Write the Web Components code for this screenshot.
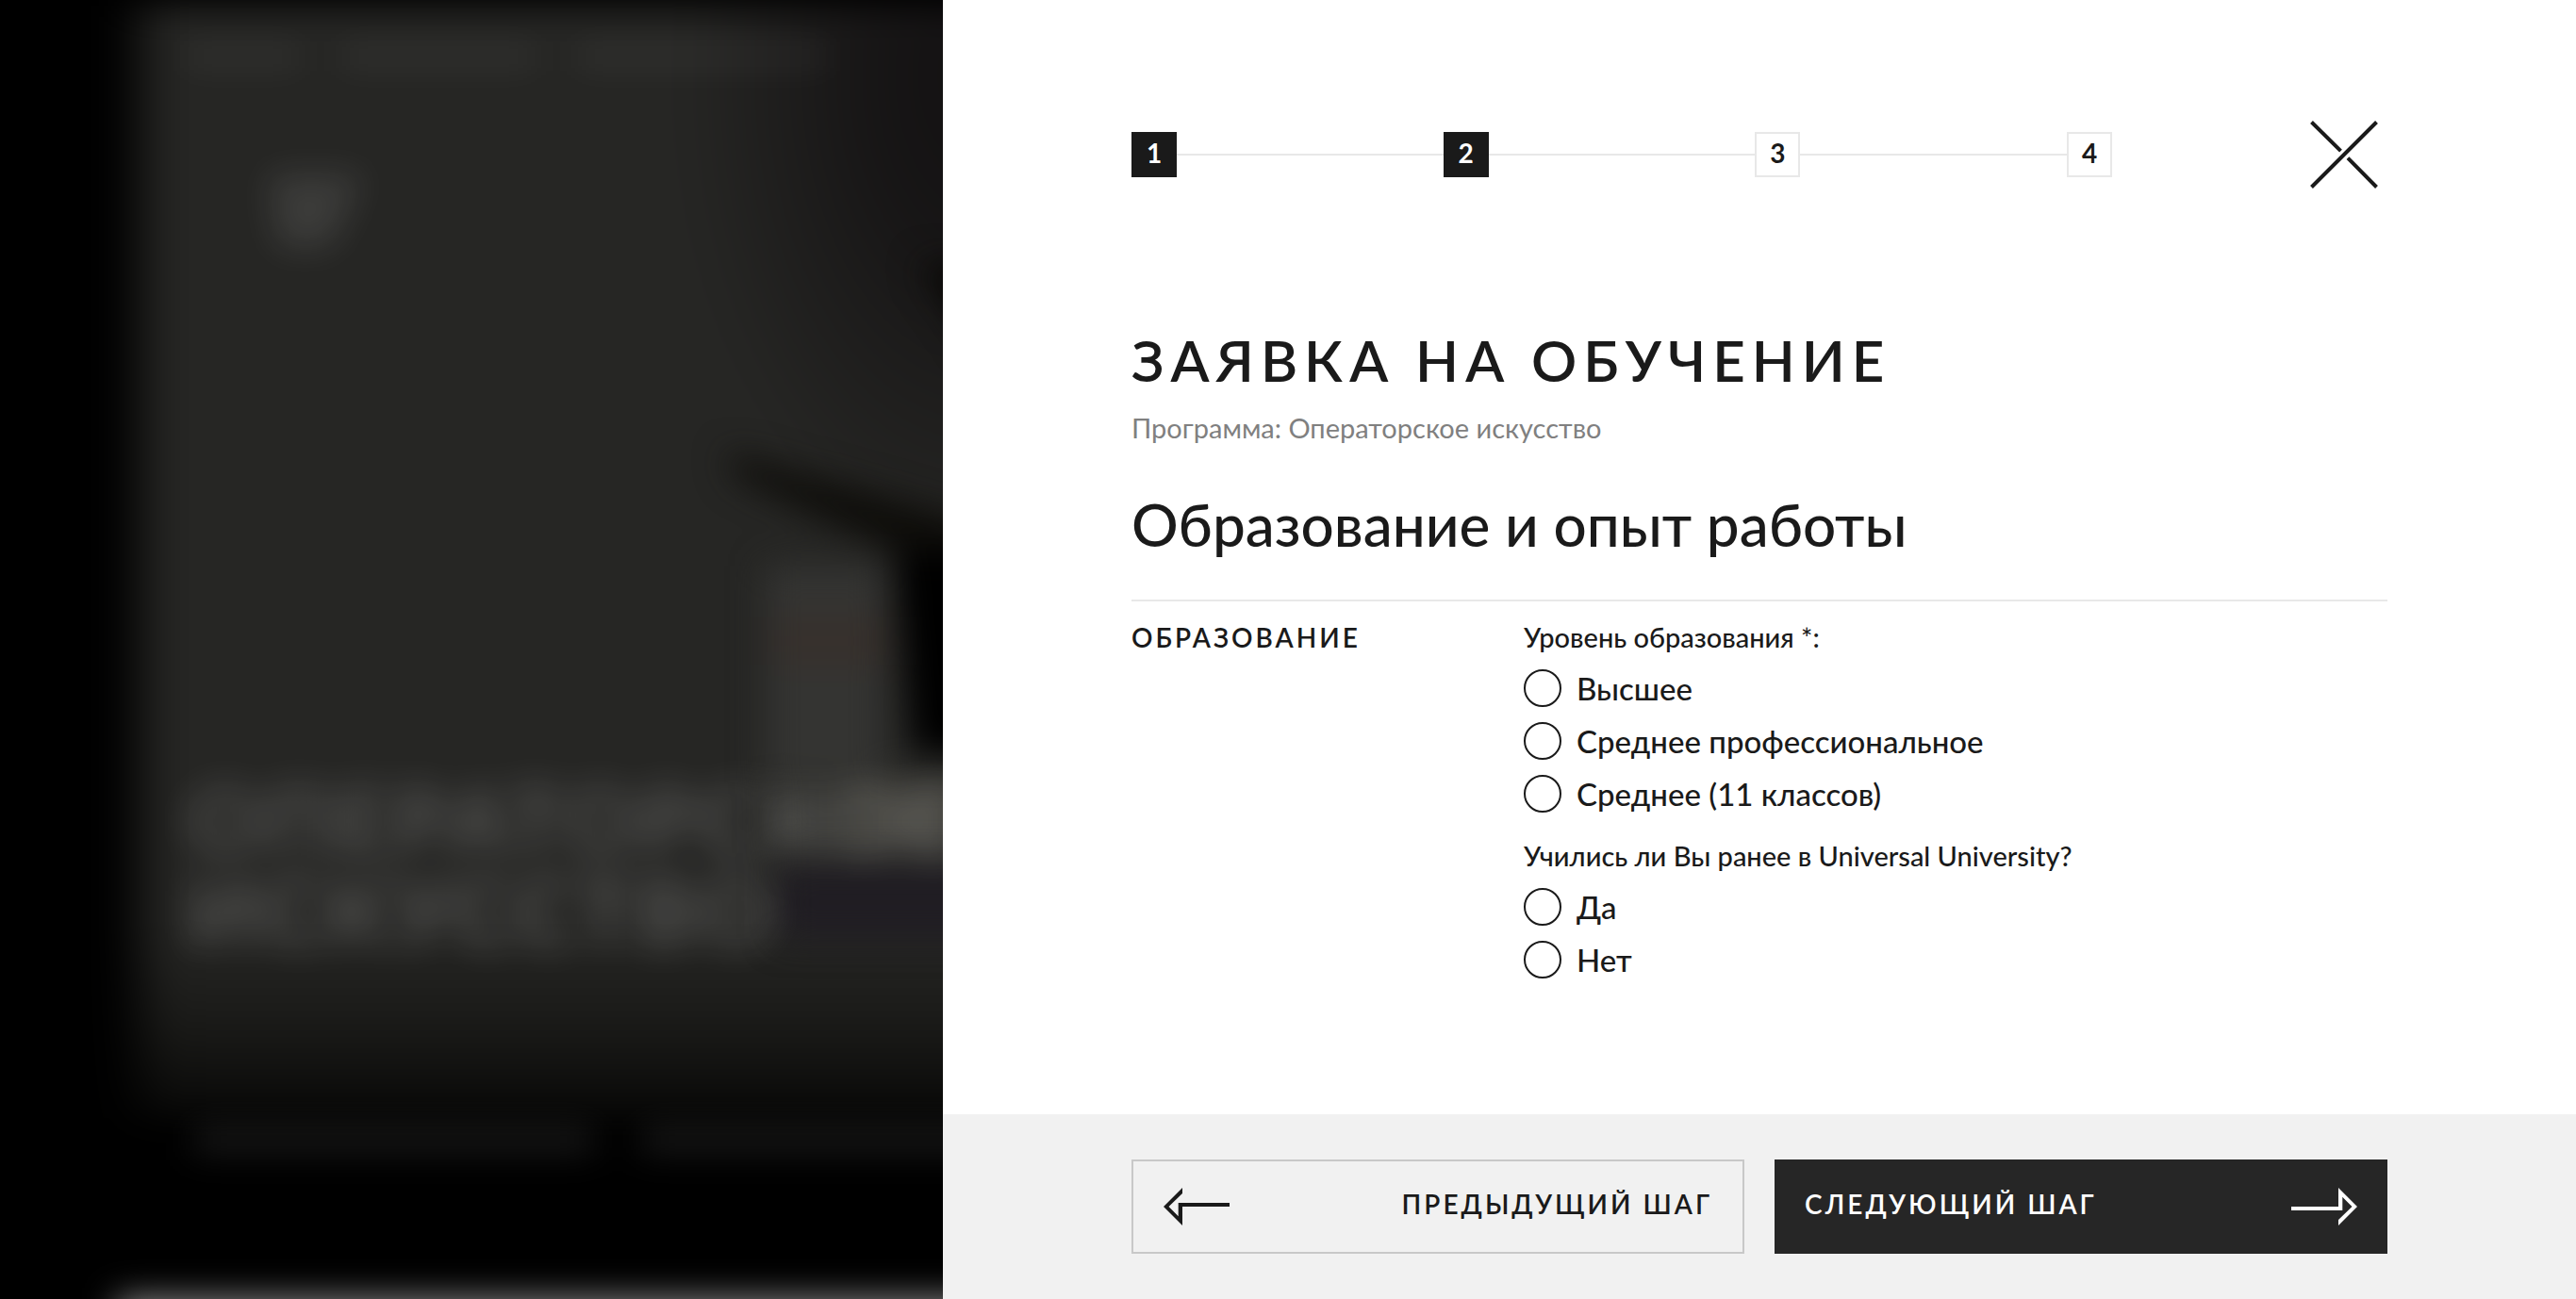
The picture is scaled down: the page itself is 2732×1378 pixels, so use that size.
<!DOCTYPE html>
<html lang="ru">
<head>
<meta charset="utf-8">
<meta name="viewport" content="width=device-width, initial-scale=1">
<title>Заявка на обучение</title>
<style>
  html, body { margin: 0; height: 100%; }
  body {
    font-family: Lato, "Open Sans", sans-serif;
    font-weight: 500;
    color: #1a1a1a;
    background: #fff;
    --ink: #1a1a1a;
    --line: #e8e8e8;
  }
</style>
</head>
<body>
<application-page></application-page>

<template id="t-application-page">
  <style>
    :host { display: flex; min-height: 100vh; }
    blurred-backdrop { flex: 1000 1 0; min-width: 0; }
    main { flex: 1732 1 0; min-width: 0; display: flex; flex-direction: column; background: #fff; }
    .body { flex: 1; padding: 128px 200px 48px; }
    header { display: flex; justify-content: space-between; align-items: center; margin-bottom: 146px; }
    step-progress { flex: 0 1 1040px; }
    h1 { margin: 0 0 18px; font-size: 60px; line-height: 72px; font-weight: 600; letter-spacing: 7px; text-transform: uppercase; }
    .program { margin: 0 0 48px; font-size: 29px; line-height: 36px; font-weight: 400; color: #808080; }
    h2 { margin: 0; padding-bottom: 44px; font-size: 62px; line-height: 72px; font-weight: 500; border-bottom: 2px solid var(--line); }
    footer { display: flex; gap: 32px; padding: 48px 200px; background: #f1f1f1; }
    footer > * { flex: 1 1 0; }
  </style>
  <blurred-backdrop></blurred-backdrop>
  <main>
    <div class="body">
      <header>
        <step-progress current="2" total="4"></step-progress>
        <close-button></close-button>
      </header>
      <h1>Заявка на обучение</h1>
      <p class="program">Программа: Операторское искусство</p>
      <h2>Образование и опыт работы</h2>
      <form-section heading="Образование">
        <radio-group name="level" legend="Уровень образования *:" options="Высшее|Среднее профессиональное|Среднее (11 классов)"></radio-group>
        <radio-group name="before" legend="Учились ли Вы ранее в Universal University?" options="Да|Нет"></radio-group>
      </form-section>
    </div>
    <footer>
      <nav-button direction="back">Предыдущий шаг</nav-button>
      <nav-button direction="forward">Следующий шаг</nav-button>
    </footer>
  </main>
</template>

<template id="t-step-progress">
  <style>
    :host { display: block; }
    ol { display: flex; align-items: center; margin: 0; padding: 0; list-style: none; }
    .step { box-sizing: border-box; width: 48px; height: 48px; padding-bottom: 4px; display: flex; align-items: center; justify-content: center; border: 2px solid var(--line); font-size: 28px; line-height: 36px; font-weight: 700; }
    .done { background: var(--ink); border-color: var(--ink); color: #fff; }
    .rail { flex: 1; height: 2px; background: var(--line); }
  </style>
  <ol></ol>
</template>

<template id="t-close-button">
  <style>
    :host { display: block; }
    button { display: block; padding: 0 10px; border: 0; background: none; color: inherit; cursor: pointer; }
    svg { display: block; }
  </style>
  <button type="button" aria-label="Закрыть">
    <svg width="72" height="72" viewBox="0 0 72 72" fill="none" stroke="currentColor" stroke-width="4">
      <path d="M1.5 70.500L70.500 1.500M1.500 1.500L32.500 32.200M40 39.700L70.500 70.500"/>
    </svg>
  </button>
</template>

<template id="t-form-section">
  <style>
    :host { display: flex; padding-top: 20px; }
    h3 { flex: 0 0 416px; margin: 0; font-size: 28px; line-height: 36px; font-weight: 600; letter-spacing: 3px; text-transform: uppercase; }
    .fields { flex: 1; display: flex; flex-direction: column; gap: 28px; }
  </style>
  <h3></h3>
  <div class="fields"><slot></slot></div>
</template>

<template id="t-radio-group">
  <style>
    :host { display: block; }
    fieldset { margin: 0; padding: 0; border: 0; min-width: 0; }
    legend { padding: 0; margin-bottom: 16px; font-size: 29px; line-height: 36px; }
    .options { display: flex; flex-direction: column; align-items: flex-start; gap: 16px; }
    label { display: flex; gap: 16px; font-size: 33px; line-height: 40px; cursor: pointer; }
    input { appearance: none; box-sizing: border-box; width: 40px; height: 40px; margin: 0; border: 2px solid var(--ink); border-radius: 50%; }
    input:checked { background: radial-gradient(var(--ink) 45%, transparent 48%); }
  </style>
  <fieldset><legend></legend><div class="options"></div></fieldset>
</template>

<template id="t-nav-button">
  <style>
    :host { display: block; }
    button { box-sizing: border-box; width: 100%; height: 100px; padding: 0 32px; display: flex; align-items: center; justify-content: space-between; border: 2px solid #c8c8c8; background: none; color: inherit; font: inherit; cursor: pointer; }
    span { padding-bottom: 6px; font-size: 28px; line-height: 36px; font-weight: 600; letter-spacing: 3px; text-transform: uppercase; }
    svg { display: block; overflow: visible; }
    :host([direction="forward"]) button { flex-direction: row-reverse; border: 0; background: #262626; color: #fff; }
    :host([direction="forward"]) svg { transform: rotate(180deg); }
  </style>
  <button type="button">
    <svg width="70" height="38" viewBox="0 0 70 38" fill="currentColor" aria-hidden="true">
      <path d="M0 19L20-1V5L5.500 19L15.700 29.200V15H70V19H20V39Z"/>
    </svg>
    <span><slot></slot></span>
  </button>
</template>

<template id="t-blurred-backdrop">
  <style>
    :host { display: block; position: relative; overflow: hidden; background: #000; }
    svg { position: absolute; inset: 0; width: 100%; height: 100%; }
    filter { color-interpolation-filters: sRGB; }
    text { font-size: 96px; font-weight: 700; letter-spacing: 4px; }
  </style>
  <svg viewBox="0 0 1000 1378" preserveAspectRatio="xMinYMin slice" aria-hidden="true">
    <defs>
      <filter id="soft" filterUnits="userSpaceOnUse" x="-200" y="-200" width="1500" height="1800"><feGaussianBlur stdDeviation="18"/></filter>
      <filter id="wide" filterUnits="userSpaceOnUse" x="-200" y="-200" width="1500" height="1800"><feGaussianBlur stdDeviation="26 18"/></filter>
      <linearGradient id="wall" x1="0" x2="0" y1="0" y2="1">
        <stop offset="0" stop-color="#262624"/><stop offset=".83" stop-color="#262624"/>
        <stop offset=".92" stop-color="#191917"/><stop offset="1" stop-color="#080807"/>
      </linearGradient>
      <radialGradient id="corner" gradientUnits="userSpaceOnUse" cx="0" cy="0" r="1" gradientTransform="translate(1040 80) scale(320 520)">
        <stop offset="0" stop-color="#131112"/><stop offset=".35" stop-color="#131112" stop-opacity=".8"/><stop offset="1" stop-color="#131112" stop-opacity="0"/>
      </radialGradient>
    </defs>
    <g filter="url(#wide)">
      <rect x="148" y="6" width="1200" height="1180" fill="url(#wall)"/>
      <rect x="700" y="6" width="600" height="640" fill="url(#corner)"/>
    </g>
    <g filter="url(#soft)">
      <path d="M770 480L1040 555V625L960 590Q880 555 780 505Z" fill="#0e0d0a"/>
      <path d="M975 280H1060V400Z" fill="#080705"/>
      <rect x="812" y="600" width="125" height="230" fill="#343432"/>
      <rect x="822" y="655" width="118" height="50" fill="#37302c"/>
      <path d="M950 585H1060V800H970Z" fill="#000"/>
      <rect x="820" y="820" width="250" height="85" fill="#31312e"/>
      <rect x="900" y="830" width="180" height="70" fill="#403f3a"/>
      <rect x="825" y="920" width="250" height="75" fill="#201d23"/>
    </g>
    <g filter="url(#soft)" fill="#fff">
      <path d="M195 48H320V72H195ZM360 48H570V72H360ZM610 48H880V72H610Z" fill-opacity=".05"/>
      <path d="M285 185H385L350 262H295Z" fill-opacity=".1"/>
      <text x="200" y="906" fill-opacity=".22">ОПЕРАТОРСКОЕ</text>
      <text x="200" y="1002" fill-opacity=".22">ИСКУССТВО</text>
      <path d="M205 1198H630V1220H205ZM680 1198H1050V1220H680Z" fill-opacity=".12"/>
      <path d="M125 1378H1100V1500H125Z" fill-opacity=".55"/>
    </g>
  </svg>
</template>

<script>
  class TemplateElement extends HTMLElement {
    connectedCallback() {
      if (this.shadowRoot) return;
      const root = this.attachShadow({ mode: 'open' });
      root.append(document.getElementById('t-' + this.localName).content.cloneNode(true));
      this.fill(root);
    }
    fill() {}
  }
  class BlurredBackdrop extends TemplateElement {}
  class CloseButton extends TemplateElement {}
  class NavButton extends TemplateElement {}
  class ApplicationPage extends TemplateElement {}
  class FormSection extends TemplateElement {
    fill(root) { root.querySelector('h3').textContent = this.getAttribute('heading'); }
  }
  class StepProgress extends TemplateElement {
    fill(root) {
      const list = root.querySelector('ol');
      const current = Number(this.getAttribute('current'));
      const total = Number(this.getAttribute('total'));
      for (let i = 1; i <= total; i++) {
        if (i > 1) {
          const rail = document.createElement('li');
          rail.className = 'rail';
          rail.setAttribute('role', 'presentation');
          list.append(rail);
        }
        const step = document.createElement('li');
        step.className = i <= current ? 'step done' : 'step';
        if (i === current) step.setAttribute('aria-current', 'step');
        step.textContent = i;
        list.append(step);
      }
    }
  }
  class RadioGroup extends TemplateElement {
    fill(root) {
      root.querySelector('legend').textContent = this.getAttribute('legend');
      const box = root.querySelector('.options');
      this.getAttribute('options').split('|').forEach((text, i) => {
        const label = document.createElement('label');
        const input = document.createElement('input');
        const caption = document.createElement('span');
        input.type = 'radio';
        input.name = this.getAttribute('name');
        input.id = input.name + '-' + i;
        input.value = text;
        label.htmlFor = input.id;
        caption.textContent = text;
        label.append(input, caption);
        box.append(label);
      });
    }
  }
  customElements.define('blurred-backdrop', BlurredBackdrop);
  customElements.define('close-button', CloseButton);
  customElements.define('nav-button', NavButton);
  customElements.define('step-progress', StepProgress);
  customElements.define('radio-group', RadioGroup);
  customElements.define('form-section', FormSection);
  customElements.define('application-page', ApplicationPage);
</script>
</body>
</html>
